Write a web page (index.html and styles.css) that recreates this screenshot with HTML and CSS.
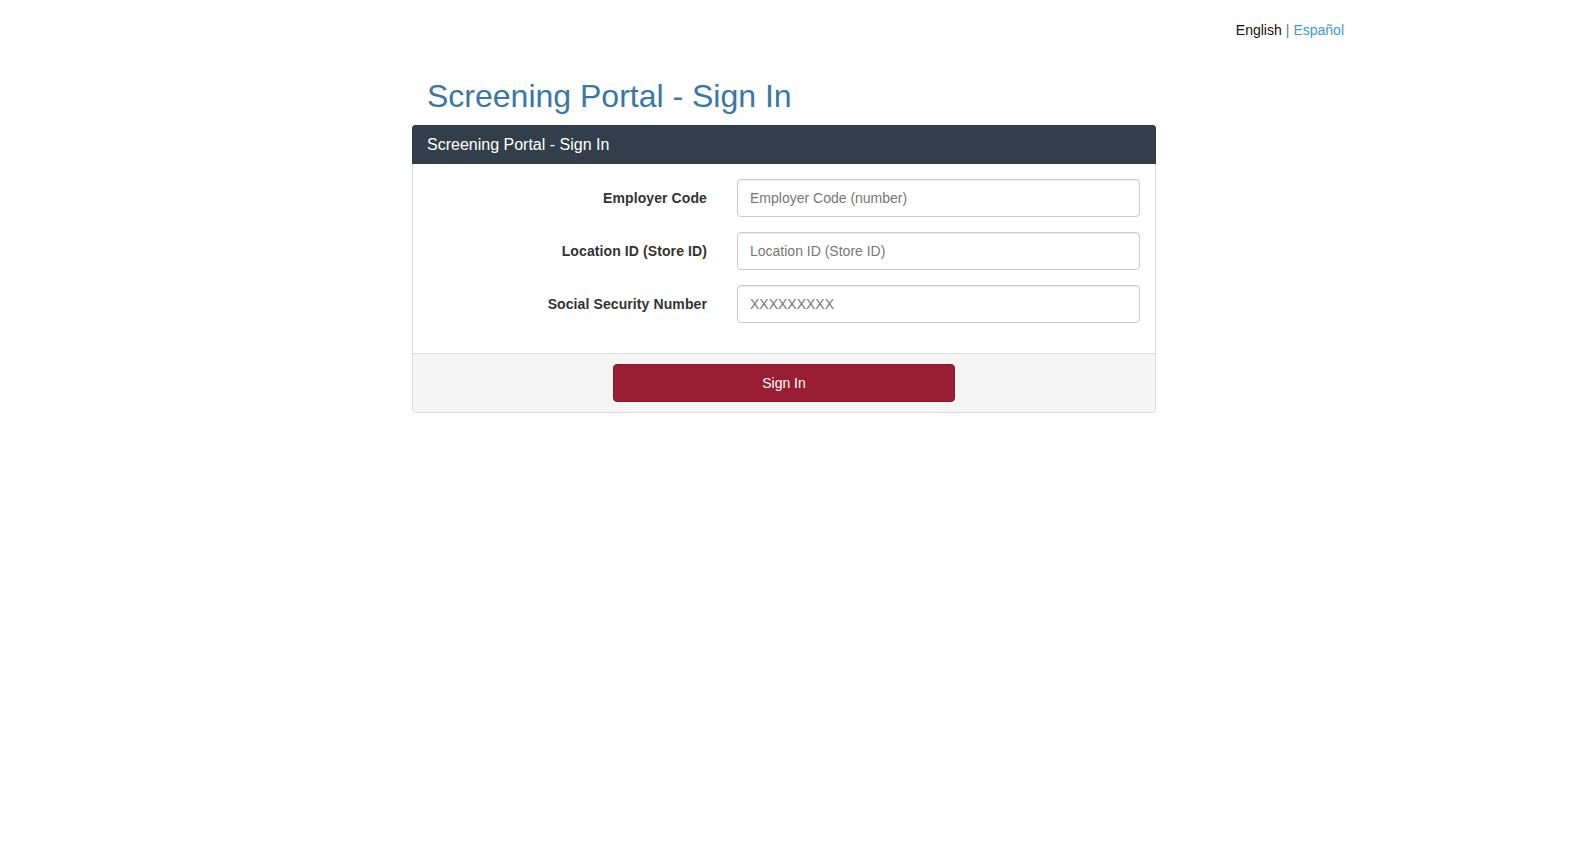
FILE: index.html
```html
<!DOCTYPE html>
<html lang="en">
<head>
<meta charset="utf-8">
<title>Screening Portal - Sign In</title>
<link rel="stylesheet" href="styles.css">
</head>
<body>
<div class="langbar">
  <span class="lang-current">English</span><span class="lang-sep">|</span><a class="lang-link" href="#">Español</a>
</div>
<div class="main">
  <h1 class="page-title">Screening Portal - Sign In</h1>
  <div class="panel">
    <div class="panel-heading">Screening Portal - Sign In</div>
    <div class="panel-body">
      <div class="form-row">
        <label class="form-label" for="emp">Employer Code</label>
        <input class="form-input" id="emp" type="text" placeholder="Employer Code (number)">
      </div>
      <div class="form-row">
        <label class="form-label" for="loc">Location ID (Store ID)</label>
        <input class="form-input" id="loc" type="text" placeholder="Location ID (Store ID)">
      </div>
      <div class="form-row">
        <label class="form-label" for="ssn">Social Security Number</label>
        <input class="form-input" id="ssn" type="text" placeholder="XXXXXXXXX">
      </div>
    </div>
    <div class="panel-footer">
      <button class="btn-signin" type="button">Sign In</button>
    </div>
  </div>
</div>
</body>
</html>
```

FILE: styles.css
```css
html, body {
  margin: 0;
  padding: 0;
  background: #ffffff;
}
body {
  font-family: "Liberation Sans", Arial, Helvetica, sans-serif;
  font-size: 14px;
  line-height: 20px;
  color: #333333;
}
.langbar {
  width: 1130px;
  margin-left: calc(50% - 575px);
  padding-top: 20px;
  display: flex;
  justify-content: flex-end;
  align-items: center;
  line-height: 20px;
}
.lang-current {
  color: #111111;
}
.lang-sep {
  color: #777777;
  margin: 0 4px;
}
.lang-link {
  color: #3d9ad6;
  text-decoration: none;
}
.main {
  width: 744px;
  margin-left: calc(50% - 377px);
}
.page-title {
  margin: 39px 0 11px 15px;
  font-size: 32px;
  font-weight: normal;
  line-height: 35px;
  color: #3878a8;
}
.panel {
  border: 1px solid #dddddd;
  border-radius: 4px;
  background: #ffffff;
  box-shadow: 0 1px 1px rgba(0,0,0,0.05);
}
.panel-heading {
  background: #323f4a;
  color: #ffffff;
  font-size: 16px;
  line-height: 17px;
  padding: 10px 14px 10px 14px;
  border-radius: 3px 3px 0 0;
  margin: -1px -1px 0 -1px;
  border: 1px solid #323f4a;
}
.panel-body {
  padding: 15px 15px 15px 15px;
}
.form-row {
  display: grid;
  grid-template-columns: 279px 1fr;
  column-gap: 30px;
  align-items: center;
  margin-bottom: 15px;
}
.form-label {
  text-align: right;
  font-weight: bold;
  color: #333333;
  letter-spacing: 0.1px;
}
.form-input {
  box-sizing: border-box;
  height: 38px;
  width: 100%;
  padding: 6px 12px;
  font-family: "Liberation Sans", Arial, Helvetica, sans-serif;
  font-size: 14px;
  color: #555555;
  border: 1px solid #cccccc;
  border-radius: 4px;
  background: #ffffff;
  box-shadow: inset 0 1px 1px rgba(0,0,0,0.075);
  outline: none;
}
.form-input::placeholder {
  color: #777777;
  opacity: 1;
}
.panel-footer {
  background: #f5f5f5;
  border-top: 1px solid #dddddd;
  border-radius: 0 0 3px 3px;
  padding: 10px 15px;
  display: flex;
  justify-content: center;
}
.btn-signin {
  width: 342px;
  height: 38px;
  background: #9a1e33;
  color: #ffffff;
  border: 1px solid #8c1a2d;
  border-radius: 4px;
  font-family: "Liberation Sans", Arial, Helvetica, sans-serif;
  font-size: 14px;
  cursor: pointer;
}
```
